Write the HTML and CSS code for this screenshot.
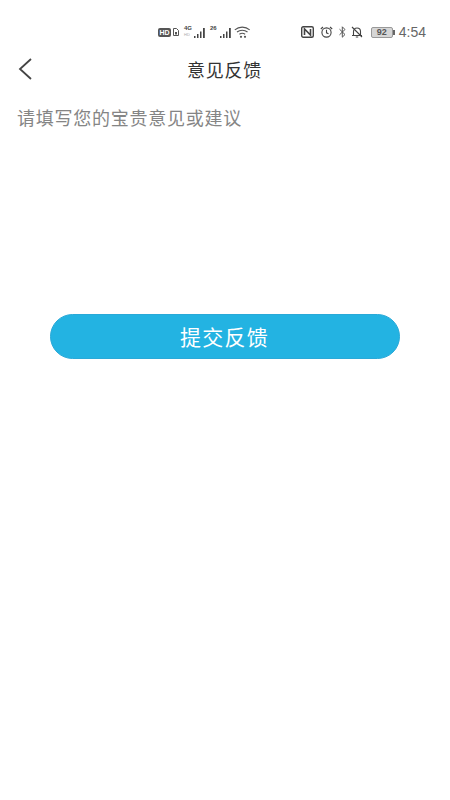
FILE: index.html
```html
<!DOCTYPE html>
<html lang="zh-CN">
<head>
  <meta charset="UTF-8">
  <meta name="viewport" content="width=device-width, initial-scale=1.0">
  <title>意见反馈</title>
  <link rel="stylesheet" href="styles.css">
</head>
<body>

  <div class="status-bar">
    <div class="status-left">
      <span class="hd-badge">HD</span>
      <svg class="icon-sim" width="6" height="8" viewBox="0 0 6 8"><path d="M.5 7.500V.5h3l2 2v5z" fill="none" stroke="#555" stroke-width="1"/><rect x="2" y="4" width="2" height="2.500" fill="#555"/></svg>
      <div class="signal">
        <span class="net-label">4G<br><i>HD</i></span>
        <svg width="13" height="11" viewBox="0 0 13 11"><path d="M1 9h1.500v2H1zM4 7h1.500v4H4zM7 4.500h1.500V11H7zM10 1h1.800v10H10z" fill="#444"/></svg>
      </div>
      <div class="signal">
        <span class="net-label">26</span>
        <svg width="13" height="11" viewBox="0 0 13 11"><path d="M1 9h1.500v2H1zM4 7h1.500v4H4zM7 4.500h1.500V11H7zM10 1h1.800v10H10z" fill="#444"/></svg>
      </div>
      <svg class="icon-wifi" width="17" height="12" viewBox="0 0 17 12"><path d="M.8 3.800C5 .2 11.500.2 15.700 3.800M3 6c3-2.400 7.500-2.400 10.500 0M5.400 8.200c1.700-1.200 4-1.200 5.700 0" fill="none" stroke="#555" stroke-width="1.100"/><circle cx="7" cy="10.800" r="1.100" fill="#555"/><circle cx="11" cy="10.800" r="1.100" fill="#555"/></svg>
    </div>
    <div class="status-right">
      <svg class="icon-nfc" width="13" height="12" viewBox="0 0 13 12"><rect x=".7" y=".7" width="11.600" height="10.600" rx="1.500" fill="none" stroke="#444" stroke-width="1.400"/><path d="M3.500 9V3l6 6V3" fill="none" stroke="#444" stroke-width="1.600"/></svg>
      <svg class="icon-alarm" width="13" height="12" viewBox="0 0 13 12"><circle cx="6.500" cy="6.500" r="4.600" fill="none" stroke="#444" stroke-width="1.100"/><path d="M6.500 3.800v3l2 1M.8 3L3 1M12.200 3L10 1" fill="none" stroke="#444" stroke-width="1.100"/></svg>
      <svg class="icon-bt" width="7" height="12" viewBox="0 0 7 12"><path d="M.5 3.200l5.500 5.300-2.700 2.700V.8L6 3.500.5 8.800" fill="none" stroke="#555" stroke-width="1"/></svg>
      <svg class="icon-bell" width="12" height="12" viewBox="0 0 12 12"><path d="M2.500 9.500V5.500C2.500 3.500 4 2 6 2s3.500 1.500 3.500 3.500v4M1 9.500h10M4.800 11h2.400M1 1l10 10" fill="none" stroke="#444" stroke-width="1.100"/></svg>
      <div class="battery"><span class="battery-body">92</span><span class="battery-tip"></span></div>
      <span class="clock">4:54</span>
    </div>
  </div>

  <div class="nav-bar">
    <svg class="back" width="16" height="24" viewBox="0 0 16 24"><path d="M14 2L3 12l11 10" fill="none" stroke="#444" stroke-width="1.800"/></svg>
    <h1 class="nav-title">意见反馈</h1>
  </div>

  <div class="feedback-input">请填写您的宝贵意见或建议</div>

  <button class="submit">提交反馈</button>

</body>
</html>
```

FILE: styles.css
```css
body {
  margin: 0;
  background: #fff;
  font-family: "Liberation Sans", "Noto Sans CJK SC", sans-serif;
}

.status-bar {
  display: flex;
  justify-content: space-between;
  align-items: center;
  height: 46px;
  padding: 18px 24px 0 158px;
  box-sizing: border-box;
}

.status-left,
.status-right {
  display: flex;
  align-items: center;
}

.hd-badge {
  width: 13px;
  height: 9px;
  background: #555;
  border-radius: 2px;
  color: #fff;
  font-size: 7px;
  font-weight: bold;
  line-height: 9px;
  text-align: center;
}

.icon-sim {
  margin: 0 5px 0 2px;
}

.signal {
  display: flex;
  align-items: flex-end;
  margin-right: 4px;
}

.net-label {
  width: 9px;
  margin-top: -2px;
  font-size: 6px;
  font-weight: bold;
  line-height: 6px;
  color: #444;
  align-self: flex-start;
}

.net-label i {
  font-style: normal;
  font-weight: normal;
  font-size: 4px;
  color: #aaa;
}

.icon-wifi {
  margin-left: -2px;
}

.icon-nfc {
  margin-right: 6px;
}

.icon-alarm {
  margin-right: 6px;
}

.icon-bt {
  margin-right: 5px;
}

.icon-bell {
  margin-right: 8px;
}

.battery {
  display: flex;
  align-items: center;
  margin-right: 4px;
}

.battery-body {
  width: 20px;
  height: 9px;
  background: #d6d6d6;
  border: 1px solid #999;
  border-radius: 2px;
  color: #555;
  font-size: 9px;
  font-weight: bold;
  line-height: 9px;
  text-align: center;
}

.battery-tip {
  width: 2px;
  height: 5px;
  background: #666;
}

.clock {
  font-size: 14px;
  color: #666;
}

.nav-bar {
  position: relative;
  display: flex;
  justify-content: center;
  align-items: center;
  height: 46px;
  padding-bottom: 2px;
}

.back {
  position: absolute;
  left: 17px;
  top: 11px;
}

.nav-title {
  margin: 0 1px 0 0;
  font-size: 18px;
  font-weight: normal;
  letter-spacing: 0.750px;
  color: #333;
}

.feedback-input {
  height: 207px;
  padding: 13px 17px 0;
  font-size: 18px;
  line-height: 24px;
  letter-spacing: 0.750px;
  color: #858585;
}

.submit {
  display: block;
  width: 350px;
  height: 45px;
  margin: 0 0 0 50px;
  padding: 0 1px 2px 0;
  background: #23b3e2;
  border: 1px solid #2aa9d8;
  border-radius: 23px;
  color: #fff;
  font-family: inherit;
  font-size: 21px;
  letter-spacing: 1.200px;
}
```
